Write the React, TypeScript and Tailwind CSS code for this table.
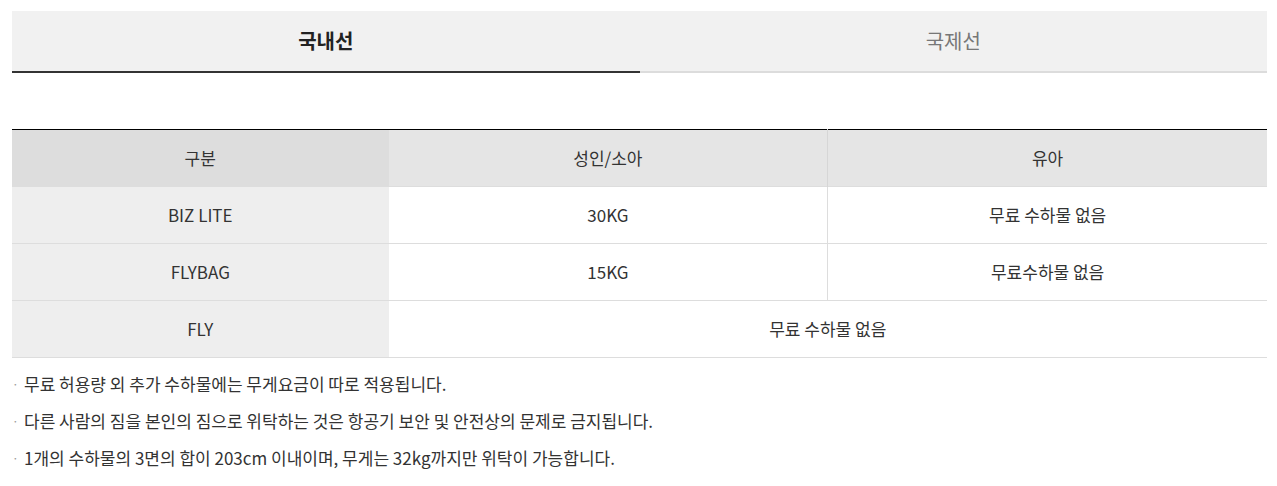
import React from 'react';

type Row = {
  name: string;
  adult: string;
  infant?: string;
};

const rows: Row[] = [
  { name: 'BIZ LITE', adult: '30KG', infant: '무료 수하물 없음' },
  { name: 'FLYBAG', adult: '15KG', infant: '무료수하물 없음' },
  { name: 'FLY', adult: '무료 수하물 없음' },
];

const notes = [
  '무료 허용량 외 추가 수하물에는 무게요금이 따로 적용됩니다.',
  '다른 사람의 짐을 본인의 짐으로 위탁하는 것은 항공기 보안 및 안전상의 문제로 금지됩니다.',
  '1개의 수하물의 3면의 합이 203cm 이내이며, 무게는 32kg까지만 위탁이 가능합니다.',
];

export default function App() {
  return (
    <div className="bg-white pt-[11px] pl-[12px] w-[1267px] text-[#333] font-['Noto_Sans_CJK_KR','Noto_Sans',sans-serif]">
      {/* tabs */}
      <div className="flex">
        <button className="flex-1 h-[62px] bg-[#f1f1f1] border-b-2 border-[#333] text-[20px] font-bold text-[#222]">
          국내선
        </button>
        <button className="flex-1 h-[62px] bg-[#f1f1f1] border-b-2 border-[#dcdcdc] text-[20px] text-[#777]">
          국제선
        </button>
      </div>

      <table className="mt-[56px] w-full border-collapse border-t border-t-black text-[17px] table-fixed">
        <colgroup>
          <col className="w-[30%]" />
          <col className="w-[35%]" />
          <col className="w-[35%]" />
        </colgroup>
        <thead>
          <tr className="h-[57px] border-b border-[#dddddd]">
            <th className="font-normal bg-[#dddddd]">구분</th>
            <th className="font-normal bg-[#e5e5e5]">성인/소아</th>
            <th className="font-normal bg-[#e5e5e5] border-l border-[#d6d6d6]">유아</th>
          </tr>
        </thead>
        <tbody>
          {rows.map((row) => (
            <tr key={row.name} className="h-[57px] border-b border-[#dddddd]">
              <td className="text-center bg-[#eeeeee]">{row.name}</td>
              {row.infant ? (
                <>
                  <td className="text-center">{row.adult}</td>
                  <td className="text-center border-l border-[#dddddd]">{row.infant}</td>
                </>
              ) : (
                <td colSpan={2} className="text-center">{row.adult}</td>
              )}
            </tr>
          ))}
        </tbody>
      </table>

      <ul className="mt-[15px] text-[17px]">
        {notes.map((n) => (
          <li key={n} className="flex leading-[22px] mb-[15px]">
            <span className="w-[12px] text-[#999] text-[12px]">·</span>
            <span>{n}</span>
          </li>
        ))}
      </ul>
    </div>
  );
}
